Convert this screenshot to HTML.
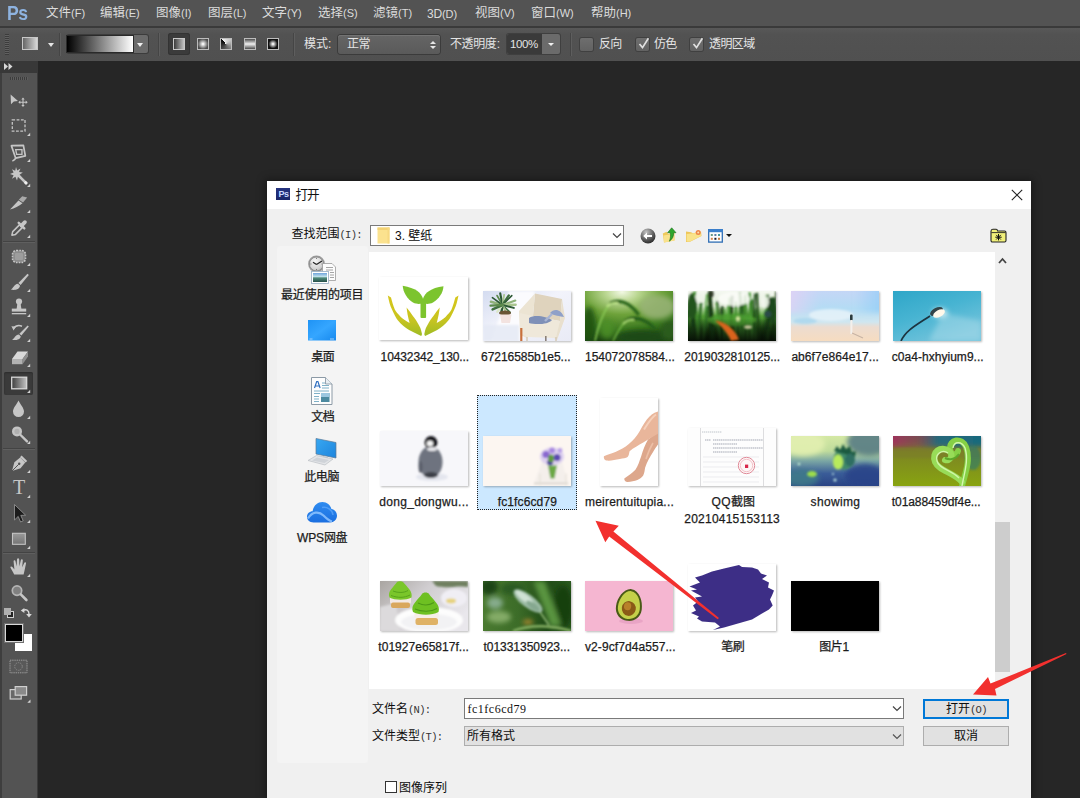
<!DOCTYPE html>
<html lang="zh-CN">
<head>
<meta charset="utf-8">
<title>Photoshop - 打开</title>
<style>
html,body{margin:0;padding:0}
body{width:1080px;height:798px;overflow:hidden;position:relative;background:#262626;font-family:"Liberation Sans",sans-serif;font-size:12px;color:#222}
.a{position:absolute}
.cj{display:inline-block;white-space:nowrap;font-family:"Liberation Sans","Noto Sans CJK SC",sans-serif;font-size:12px}
.t{position:absolute;white-space:nowrap;line-height:1}
/* ---------- Photoshop chrome ---------- */
#menubar{left:0;top:0;width:1080px;height:26px;background:#535353}
#menuline{left:0;top:26px;width:1080px;height:2px;background:#3a3a3a}
.mp{font-size:11px;letter-spacing:0}
.mi{color:#dcdcdc;font-size:12px;top:7px;letter-spacing:-0.2px}
.mi .cj{font-size:12.5px;width:25px;letter-spacing:0}
#optbar{left:0;top:28px;width:1080px;height:33px;background:linear-gradient(#585858,#525252 20%,#505050)}
.ot{color:#e4e4e4;font-size:12px}
.sep{width:1px;background:#454545;box-shadow:1px 0 0 #5e5e5e}
#toolhead{left:0;top:61px;width:38px;height:12px;background:#383838}
#tools{left:0;top:73px;width:38px;height:725px;background:#535353;border-left:2px solid #3e3e3e;border-right:1px solid #3a3a3a;box-sizing:border-box}
.tsep{left:3px;width:32px;height:1px;background:#434343;box-shadow:0 1px 0 #5f5f5f}
.corner{width:0;height:0;border-left:4px solid transparent;border-bottom:4px solid #d0d0d0}
/* ---------- dialog ---------- */
#dlg{left:267px;top:181px;width:764px;height:617px;background:#f0f0f0;box-shadow:0 0 8px 2px rgba(0,0,0,.35)}
#dtitle{left:0;top:0;width:764px;height:29px;background:#fff}
.dl{color:#0c0c0c;font-size:12px}
.lbl{color:#1c1c1c;font-size:12px;text-align:center;letter-spacing:0;-webkit-text-stroke:.25px #1c1c1c}
</style>
</head>
<body>
<!-- ===== menu bar ===== -->
<div class="a" id="menubar"></div>
<div class="a" id="menuline"></div>
<div class="t" style="left:7px;top:2px;font-size:21px;font-weight:bold;color:#8eb3e0;letter-spacing:-0.5px;transform:scaleX(.84);transform-origin:0 0">Ps</div>
<div class="t mi" style="left:46px"><span class="cj">文件</span><span class="mp">(F)</span></div>
<div class="t mi" style="left:100px"><span class="cj">编辑</span><span class="mp">(E)</span></div>
<div class="t mi" style="left:156px"><span class="cj">图像</span><span class="mp">(I)</span></div>
<div class="t mi" style="left:208px"><span class="cj">图层</span><span class="mp">(L)</span></div>
<div class="t mi" style="left:262px"><span class="cj">文字</span><span class="mp">(Y)</span></div>
<div class="t mi" style="left:318px"><span class="cj">选择</span><span class="mp">(S)</span></div>
<div class="t mi" style="left:373px"><span class="cj">滤镜</span><span class="mp">(T)</span></div>
<div class="t mi" style="left:427px;top:8px">3D<span class="mp">(D)</span></div>
<div class="t mi" style="left:475px"><span class="cj">视图</span><span class="mp">(V)</span></div>
<div class="t mi" style="left:531px"><span class="cj">窗口</span><span class="mp">(W)</span></div>
<div class="t mi" style="left:591px"><span class="cj">帮助</span><span class="mp">(H)</span></div>
<!-- ===== options bar ===== -->
<div class="a" id="optbar"></div>
<div class="a" style="left:5px;top:34px;width:4px;height:21px;background:repeating-linear-gradient(#3c3c3c 0 1px,#606060 1px 2px)"></div>
<div class="a" style="left:22px;top:37px;width:16px;height:13px;box-sizing:border-box;border:1px solid #c8c8c8;background:linear-gradient(90deg,#666,#d8d8d8)"></div>
<div class="a" style="left:48px;top:43px;width:0;height:0;border-left:3.5px solid transparent;border-right:3.5px solid transparent;border-top:4px solid #e6e6e6"></div>
<div class="a sep" style="left:59px;top:33px;height:23px"></div>
<div class="a" style="left:67px;top:35px;width:81px;height:18px;background:#6b6b6b;border-radius:2px;box-shadow:0 0 0 1px #3c3c3c"></div>
<div class="a" style="left:67px;top:36px;width:66px;height:16px;background:linear-gradient(90deg,#000,#fff);box-shadow:0 0 0 1px #2a2a2a"></div>
<div class="a" style="left:137px;top:43px;width:0;height:0;border-left:3.5px solid transparent;border-right:3.5px solid transparent;border-top:4px solid #f0f0f0"></div>
<div class="a sep" style="left:158px;top:33px;height:23px"></div>
<div class="a" style="left:168px;top:33px;width:22px;height:22px;background:#3b3b3b;border-radius:3px;box-shadow:inset 0 0 0 1px #333"></div>
<div class="a" style="left:173px;top:38px;width:12px;height:12px;box-sizing:border-box;border:1px solid #c8c8c8;background:linear-gradient(90deg,#3c3c3c,#c4c4c4)"></div>
<div class="a" style="left:196.500px;top:38px;width:12px;height:12px;box-sizing:border-box;border:1px solid #bcbcbc;background:radial-gradient(circle,#fff 5%,#4c4c4c 75%)"></div>
<div class="a" style="left:220px;top:38px;width:12px;height:12px;box-sizing:border-box;border:1px solid #bcbcbc;background:conic-gradient(from 315deg,#f4f4f4,#c8c8c8 25%,#707070 55%,#0c0c0c)"></div>
<div class="a" style="left:243.500px;top:38px;width:12px;height:12px;box-sizing:border-box;border:1px solid #bcbcbc;background:linear-gradient(#4c4c4c,#f0f0f0 50%,#4c4c4c)"></div>
<div class="a" style="left:267px;top:38px;width:12px;height:12px;box-sizing:border-box;border:1px solid #bcbcbc;background:radial-gradient(closest-side,#fff 8%,#111 90%)"></div>
<div class="a sep" style="left:293px;top:33px;height:23px"></div>
<div class="t ot" style="left:304px;top:38px"><span class="cj" style="width:24px">模式</span>:</div>
<div class="a" style="left:338px;top:35px;width:102px;height:19px;border-radius:3px;background:linear-gradient(#656565,#5a5a5a);box-shadow:0 0 0 1px #3b3b3b,inset 0 1px 0 #737373"></div>
<div class="t ot" style="left:347px;top:38px"><span class="cj" style="width:23.5px;letter-spacing:-0.5px">正常</span></div>
<div class="a" style="left:430px;top:41px;width:0;height:0;border-left:3px solid transparent;border-right:3px solid transparent;border-bottom:3px solid #e8e8e8"></div>
<div class="a" style="left:430px;top:46px;width:0;height:0;border-left:3px solid transparent;border-right:3px solid transparent;border-top:3px solid #e8e8e8"></div>
<div class="t ot" style="left:450px;top:38px"><span class="cj" style="width:46.8px;letter-spacing:-0.4px">不透明度</span>:</div>
<div class="a" style="left:507px;top:34px;width:53px;height:20px;border-radius:2px;background:#6b6b6b;box-shadow:0 0 0 1px #3f3f3f"></div>
<div class="a" style="left:507px;top:34px;width:35px;height:20px;background:#3a3a3a;border-radius:2px 0 0 2px"></div>
<div class="t ot" style="left:510px;top:39px;font-size:11.5px;letter-spacing:-0.4px">100%</div>
<div class="a" style="left:548px;top:43px;width:0;height:0;border-left:3px solid transparent;border-right:3px solid transparent;border-top:3.5px solid #f0f0f0"></div>
<div class="a sep" style="left:570px;top:33px;height:23px"></div>
<div class="a cb" style="left:580px;top:38px;width:13px;height:13px;border-radius:2px;background:linear-gradient(#6e6e6e,#626262);box-shadow:0 0 0 1px #404040"></div>
<div class="t ot" style="left:599px;top:38px"><span class="cj" style="width:23.2px;letter-spacing:-0.8px">反向</span></div>
<div class="a cb" style="left:636px;top:38px;width:13px;height:13px;border-radius:2px;background:linear-gradient(#6e6e6e,#626262);box-shadow:0 0 0 1px #404040"></div>
<svg class="a" style="left:636px;top:35px" width="16" height="16" viewBox="0 0 16 16"><path d="M3.500 9L6.500 12.600L12.400 3.200" fill="none" stroke="#e0e0e0" stroke-width="1.700"/></svg>
<div class="t ot" style="left:654px;top:38px"><span class="cj" style="width:23.2px;letter-spacing:-0.8px">仿色</span></div>
<div class="a cb" style="left:690px;top:38px;width:13px;height:13px;border-radius:2px;background:linear-gradient(#6e6e6e,#626262);box-shadow:0 0 0 1px #404040"></div>
<svg class="a" style="left:690px;top:35px" width="16" height="16" viewBox="0 0 16 16"><path d="M3.500 9L6.500 12.600L12.400 3.200" fill="none" stroke="#e0e0e0" stroke-width="1.700"/></svg>
<div class="t ot" style="left:709px;top:38px"><span class="cj" style="width:46.2px;letter-spacing:-0.6px">透明区域</span></div>
<!-- ===== tool panel ===== -->
<div class="a" id="toolhead"></div>
<svg class="a" style="left:4px;top:63px" width="9" height="7" viewBox="0 0 9 7"><path d="M0 0L4 3.5L0 7ZM4.5 0L8.5 3.5L4.5 7Z" fill="#d8d8d8"/></svg>
<div class="a" id="tools"></div>
<div class="a" style="left:10px;top:77px;width:18px;height:3px;background:repeating-linear-gradient(90deg,#3c3c3c 0 1px,#5d5d5d 1px 2px)"></div>
<svg class="a" style="left:7px;top:88px" width="26" height="26" viewBox="0 0 26 26"><path d="M3.6 6.4L4 16.2L6.8 13.6L11 13.1Z" fill="#c6c6c6"/><path d="M16 11v6.6M12.700 14.3h6.600" stroke="#c6c6c6" stroke-width="1.1" fill="none"/><path d="M16 9.600l1.700 2h-3.400zM16 19l1.700-2h-3.400zM11.300 14.300l2-1.700v3.400zM20.700 14.300l-2-1.700v3.400z" fill="#c6c6c6"/></svg>
<svg class="a" style="left:7px;top:114px" width="26" height="26" viewBox="0 0 26 26"><rect x="5.3" y="5.9" width="12.7" height="11.2" fill="none" stroke="#c6c6c6" stroke-width="1.3" stroke-dasharray="2.8 1.5"/><path d="M23.2 18.8v3.1h-3.1z" fill="#d0d0d0"/></svg>
<svg class="a" style="left:7px;top:140px" width="26" height="26" viewBox="0 0 26 26"><g transform="translate(-.4 1.400) scale(.96)"><path d="M5 4.5L17.5 4.2L19.5 15L9.5 17.5Z" fill="none" stroke="#c6c6c6" stroke-width="1.8" stroke-linejoin="round"/><path d="M9.5 8.5h6.5v5h-5.5z" fill="none" stroke="#c6c6c6" stroke-width="1.4"/><path d="M9.5 17.5C8.500 19.500 7 20 6 20.500" stroke="#c6c6c6" stroke-width="1.6" fill="none"/></g><path d="M23.2 18.8v3.1h-3.1z" fill="#d0d0d0"/></svg>
<svg class="a" style="left:7px;top:165px" width="26" height="26" viewBox="0 0 26 26"><path d="M9 2l1.2 3.6L13.5 3.5L12 7l3.8 0.6L12.5 9.8l2 3L11 11.6L10 15.5L8.4 11.8L5 13.8l1.6-3.6L3 9l3.6-1.4L5 4.2l3.2 1.6Z" fill="#c6c6c6"/><path d="M11.5 10.5L19.4 18.4" stroke="#c6c6c6" stroke-width="2.5"/><path d="M17.800 16.800l2.200 2.200" stroke="#eee" stroke-width="2.700"/><path d="M23.2 18.8v3.1h-3.1z" fill="#d0d0d0"/></svg>
<svg class="a" style="left:7px;top:191px" width="26" height="26" viewBox="0 0 26 26"><g transform="translate(-1 -1)"><path d="M4 19.5L12.5 10.5L16.5 13.2C13 16 8.5 18.5 4 19.5Z" fill="#c6c6c6"/><path d="M12.8 9.8L16.2 6.2L21.2 7.6L17 12.6Z" fill="#a9a9a9"/></g><path d="M23.2 18.8v3.1h-3.1z" fill="#d0d0d0"/></svg>
<svg class="a" style="left:7px;top:216px" width="26" height="26" viewBox="0 0 26 26"><g transform="translate(-.3 -1.600)"><path d="M5.2 20.8L6 17.2L13 10.2L15.8 13L8.8 20Z" fill="none" stroke="#c6c6c6" stroke-width="1.5" stroke-linejoin="round"/><path d="M12 8.4L17.6 14" stroke="#c6c6c6" stroke-width="2.4" stroke-linecap="round"/><path d="M14.8 11.2L18.2 7.8" stroke="#c6c6c6" stroke-width="3.800" stroke-linecap="round"/></g><path d="M23.2 18.8v3.1h-3.1z" fill="#d0d0d0"/></svg>
<svg class="a" style="left:7px;top:244px" width="26" height="26" viewBox="0 0 26 26"><rect x="5.5" y="6.5" width="13" height="12" rx="4" fill="#8c8c8c" stroke="#c6c6c6" stroke-width="1.6" stroke-dasharray="1.6 1.2"/><rect x="8" y="9" width="8" height="7" rx="1" fill="#9d9d9d"/><path d="M23.2 18.8v3.1h-3.1z" fill="#d0d0d0"/></svg>
<svg class="a" style="left:7px;top:270px" width="26" height="26" viewBox="0 0 26 26"><path d="M20.5 3.8L21.8 5L13.6 15L11.4 13Z" fill="#c6c6c6"/><path d="M11 13.8L13 15.8C12.6 19.5 8 20.6 3.8 19.6C6.4 18.4 6.8 14.4 11 13.8Z" fill="#c6c6c6"/><path d="M23.2 18.8v3.1h-3.1z" fill="#d0d0d0"/></svg>
<svg class="a" style="left:7px;top:295px" width="26" height="26" viewBox="0 0 26 26"><circle cx="12" cy="6.6" r="3.1" fill="#c6c6c6"/><path d="M10.4 8.5h3.2l0.8 5.5h-4.8z" fill="#c6c6c6"/><rect x="4.8" y="13.6" width="14.4" height="3" fill="#c6c6c6"/><rect x="4.8" y="18" width="14.4" height="1.3" fill="#c6c6c6"/><path d="M23.2 18.8v3.1h-3.1z" fill="#d0d0d0"/></svg>
<svg class="a" style="left:7px;top:320px" width="26" height="26" viewBox="0 0 26 26"><path d="M20.6 5.5L21.8 6.6L14.4 15.6L12.4 13.8Z" fill="#c6c6c6"/><path d="M12 14.6L13.8 16.4C13.4 19.4 9 20.6 5 19.8C7.6 18.6 8 15 12 14.6Z" fill="#c6c6c6"/><path d="M6.5 8.5C8.5 5.8 12 5 15 6.2" stroke="#c6c6c6" stroke-width="1.5" fill="none"/><path d="M4.4 6.2l4.4 0.2l-2.2 4z" fill="#c6c6c6"/><path d="M23.2 18.8v3.1h-3.1z" fill="#d0d0d0"/></svg>
<svg class="a" style="left:7px;top:345px" width="26" height="26" viewBox="0 0 26 26"><path d="M10.5 6.5L21 6.5L15.6 14L5 14Z" fill="#d9d9d9"/><path d="M5 14L15.6 14L15.6 19.2L5 19.2Z" fill="#b2b2b2"/><path d="M15.6 14L21 6.5L21 11.6L15.6 19.2Z" fill="#8f8f8f"/><path d="M23.2 18.8v3.1h-3.1z" fill="#d0d0d0"/></svg>
<div class="a" style="left:4px;top:372px;width:29px;height:23px;background:#3a3a3a;border-radius:2px;box-shadow:inset 0 1px 2px #2c2c2c"></div>
<svg class="a" style="left:7px;top:371px" width="26" height="26" viewBox="0 0 26 26"><rect x="4.7" y="6.2" width="15" height="11.6" fill="url(#gtool)" stroke="#d8d8d8" stroke-width="1.3"/><defs><linearGradient id="gtool"><stop offset="0" stop-color="#3c3c3c"/><stop offset="1" stop-color="#c4c4c4"/></linearGradient></defs><path d="M23.2 18.8v3.1h-3.1z" fill="#d0d0d0"/></svg>
<svg class="a" style="left:7px;top:397px" width="26" height="26" viewBox="0 0 26 26"><path d="M11.5 3.5C13.5 8 17 10.8 17 14.6A5.5 5.5 0 0 1 6 14.6C6 10.8 9.5 8 11.5 3.5Z" fill="#c6c6c6"/><path d="M23.2 18.8v3.1h-3.1z" fill="#d0d0d0"/></svg>
<svg class="a" style="left:7px;top:422px" width="26" height="26" viewBox="0 0 26 26"><circle cx="10" cy="9.4" r="5" fill="#c4c4c4"/><circle cx="10" cy="9.4" r="2.6" fill="#b0b0b0"/><path d="M13.6 13L20 19.4" stroke="#c6c6c6" stroke-width="2.4" stroke-linecap="round"/><path d="M23.2 18.8v3.1h-3.1z" fill="#d0d0d0"/></svg>
<svg class="a" style="left:7px;top:451px" width="26" height="26" viewBox="0 0 26 26"><path d="M5 20L7.4 11.2L13.2 6.6L18.2 11.4L13.6 17.2Z" fill="#c6c6c6"/><path d="M5 20L11.6 13.4" stroke="#535353" stroke-width="1"/><circle cx="12.2" cy="12.8" r="1.2" fill="#535353"/><path d="M14.6 4.6L20.2 10L18.6 11.6L13 6.2Z" fill="#c6c6c6"/><path d="M23.2 18.8v3.1h-3.1z" fill="#d0d0d0"/></svg>
<svg class="a" style="left:7px;top:476px" width="26" height="26" viewBox="0 0 26 26"><text x="12" y="18.400" font-family="Liberation Serif" font-size="20" text-anchor="middle" fill="#c6c6c6">T</text><path d="M23.2 18.8v3.1h-3.1z" fill="#d0d0d0"/></svg>
<svg class="a" style="left:7px;top:501px" width="26" height="26" viewBox="0 0 26 26"><path d="M7.5 3.5L7.5 19L11.2 15.4L13.6 21L16.2 19.8L13.8 14.4L18.6 14.2Z" fill="#1c1c1c" stroke="#9a9a9a" stroke-width="0.8"/><path d="M23.2 18.8v3.1h-3.1z" fill="#d0d0d0"/></svg>
<svg class="a" style="left:7px;top:527px" width="26" height="26" viewBox="0 0 26 26"><rect x="5.500" y="6.300" width="12.800" height="11" fill="url(#grect)" stroke="#c4c4c4" stroke-width="1.1"/><defs><linearGradient id="grect" x2="0" y2="1"><stop offset="0" stop-color="#9a9a9a"/><stop offset="1" stop-color="#747474"/></linearGradient></defs><path d="M23.2 18.8v3.1h-3.1z" fill="#d0d0d0"/></svg>
<svg class="a" style="left:7px;top:555px" width="26" height="26" viewBox="0 0 26 26"><path d="M7.2 19.5C5.6 16.6 4.4 14.4 3.4 12.6C3.2 11.4 4.6 11 5.4 12L7.4 14.4L6.6 6.4C6.6 5 8.4 5 8.6 6.4L9.6 11.6L10 4.4C10.2 3 12 3 12.2 4.4L12.4 11.6L13.8 5.2C14.2 3.8 15.8 4.2 15.8 5.6L15.2 12.2L17.2 8C17.8 6.8 19.2 7.4 19 8.6L17.6 15.2L16.6 19.5Z" fill="#c6c6c6"/><path d="M23.2 18.8v3.1h-3.1z" fill="#d0d0d0"/></svg>
<svg class="a" style="left:7px;top:581px" width="26" height="26" viewBox="0 0 26 26"><circle cx="10" cy="9.6" r="4.7" fill="#808080" stroke="#b4b4b4" stroke-width="1.700"/><path d="M13.8 13.4L19.4 19" stroke="#c6c6c6" stroke-width="2.6" stroke-linecap="round"/></svg>
<div class="a tsep" style="top:241px"></div>
<div class="a tsep" style="top:448px"></div>
<div class="a tsep" style="top:552px"></div>
<!-- mini swatches + swap -->
<div class="a" style="left:7px;top:611px;width:5px;height:5px;background:#222;border:1px solid #d0d0d0"></div>
<div class="a" style="left:4px;top:608px;width:6.500px;height:6.500px;background:#b0b0b0;border:0"></div>
<svg class="a" style="left:20px;top:606px" width="13" height="13" viewBox="0 0 13 13"><path d="M3 4.5C6 3 9 4 9 8" fill="none" stroke="#d8d8d8" stroke-width="1.4"/><path d="M0.8 4.6L4.4 2V7Z" fill="#d8d8d8"/><path d="M6.2 8h5.6L9 11.6Z" fill="#d8d8d8"/></svg>
<div class="a" style="left:15px;top:634px;width:17px;height:17px;background:#fff"></div>
<div class="a" style="left:5px;top:624px;width:16px;height:16px;background:#000;border:1px solid #d8d8d8;box-shadow:0 0 0 1px #707070"></div>
<svg class="a" style="left:9px;top:659px" width="20" height="16" viewBox="0 0 20 16"><rect x="1" y="1.2" width="17" height="12.6" fill="#595959" stroke="#9a9a9a" stroke-width="1" stroke-dasharray="1.4 0.8"/><circle cx="9.5" cy="7.5" r="3.8" fill="none" stroke="#8a8a8a" stroke-width="1" stroke-dasharray="1.4 1"/></svg>
<svg class="a" style="left:9px;top:685px" width="24" height="20" viewBox="0 0 24 20"><rect x="1.2" y="4.6" width="11" height="9.4" fill="#686868" stroke="#cfcfcf" stroke-width="1.2"/><rect x="6.2" y="1.6" width="11.4" height="8.6" fill="#8a8a8a" stroke="#cfcfcf" stroke-width="1.2"/><path d="M21.5 14.5v3.2h-3.2z" fill="#d4d4d4"/></svg>

<!-- ===== dialog ===== -->
<div class="a" id="dlg"></div>
<div class="a" style="left:267px;top:181px;width:764px;height:28px;background:#fff"></div>
<!-- title icon + text -->
<div class="a" style="left:276.200px;top:188px;width:13.400px;height:12.400px;background:linear-gradient(#26347f,#1a266a)"></div>
<div class="t" style="left:278.5px;top:190px;font-size:9px;font-weight:bold;color:#c9d8ff;letter-spacing:-0.5px">Ps</div>
<div class="t" style="left:295.500px;top:189px;color:#111"><span class="cj" style="font-size:12.6px;width:24.2px;letter-spacing:-1px">打开</span></div>
<svg class="a" style="left:1011px;top:189px" width="12" height="12" viewBox="0 0 12 12"><path d="M0.8 0.8L11.2 11.2M11.2 0.8L0.8 11.2" stroke="#222" stroke-width="1.1"/></svg>
<!-- look-in row -->
<div class="t dl" style="left:291.500px;top:228px"><span class="cj" style="width:48px">查找范围</span><span style="font-family:'Liberation Mono',monospace;font-size:10.5px;letter-spacing:-0.7px;color:#333">(I):</span></div>
<div class="a" style="left:370px;top:225px;width:254px;height:21px;box-sizing:border-box;border:1px solid #7a7a7a;background:#fff"></div>
<svg class="a" style="left:376px;top:226px" width="15" height="19" viewBox="0 0 15 19"><path d="M1.5 1.5h12v16h-12z" fill="#fbe28e"/><path d="M1.5 1.5h12v2.5h-12z" fill="#f3d273"/><path d="M11.5 1.5h2v16h-2z" fill="#f6d981"/></svg>
<div class="t dl" style="left:395px;top:230px"><span style="font-size:12px">3.</span> <span class="cj" style="width:24px">壁纸</span></div>
<svg class="a" style="left:612px;top:232px" width="10" height="7" viewBox="0 0 10 7"><path d="M1 1.5L5 5.5L9 1.5" fill="none" stroke="#444" stroke-width="1.2"/></svg>
<!-- toolbar icons -->
<svg class="a" style="left:639px;top:227px" width="18" height="18" viewBox="0 0 18 18"><defs><radialGradient id="gb" cx=".38" cy=".25" r=".85"><stop offset="0" stop-color="#c4c4c4"/><stop offset=".5" stop-color="#6a6a6a"/><stop offset="1" stop-color="#1c1c1c"/></radialGradient></defs><circle cx="9" cy="9" r="7.500" fill="url(#gb)"/><path d="M4.200 9L8 5.400V7.900H13V10.100H8V12.600Z" fill="#fff"/></svg>
<svg class="a" style="left:662px;top:227px" width="16" height="18" viewBox="0 0 16 18"><path d="M.800 6.500L4.500 4.800L6.500 7L12.500 5.500V13.500L2 15.500Z" fill="#efc95c"/><path d="M1.500 8.500L11.800 6.800L12.500 13.500L2 15.500Z" fill="#f9e28c"/><path d="M9.700 .8L14 5.700H11.600C11.800 9 10.600 12 7.400 14.200C8.600 11 8.800 8.400 8.200 5.700H5.600Z" fill="#2ea62e" stroke="#1a6e1a" stroke-width=".6"/></svg>
<svg class="a" style="left:685px;top:229px" width="18" height="15" viewBox="0 0 18 15"><path d="M1 2.500L6 3.200L8 4.200L16 2.400L16.500 7L5 12.800L1 13Z" fill="#eec65a"/><path d="M1.600 5L15.500 3.400L16 7L5 12.500L1.600 12.600Z" fill="#f9e38a"/><circle cx="13.200" cy="3.400" r="2.500" fill="#ee8648"/><circle cx="13.200" cy="3.400" r="1" fill="#fbe0a8"/></svg>
<svg class="a" style="left:707.800px;top:228.600px" width="15" height="14" viewBox="0 0 15 14"><rect x=".7" y=".7" width="13.600" height="12.400" fill="#fdfdfd" stroke="#2f6db4" stroke-width="1.300"/><rect x=".1" y=".1" width="14.800" height="3.100" fill="#3b80cc"/><rect x="2.800" y="5" width="2" height="2" fill="#6a9a84"/><rect x="6.400" y="5" width="2" height="2" fill="#5a7ea8"/><rect x="10" y="5" width="2" height="2" fill="#4a9a9a"/><rect x="2.800" y="8.800" width="2" height="2" fill="#d8864a"/><rect x="6.400" y="8.800" width="2" height="2" fill="#1c1c2c"/><rect x="10" y="8.800" width="2" height="2" fill="#c87a3a"/></svg>
<div class="a" style="left:726px;top:234.300px;width:0;height:0;border-left:3.2px solid transparent;border-right:3.2px solid transparent;border-top:3.600px solid #111"></div>
<svg class="a" style="left:990px;top:228px" width="17" height="15" viewBox="0 0 17 15"><path d="M1 3.2C1 2 1.6 1.2 2.8 1.2H6.2C7 1.2 7.4 1.8 7.6 3H14.6C15.4 3 16 3.6 16 4.4V12.6C16 13.4 15.4 14 14.6 14H2.4C1.6 14 1 13.4 1 12.6Z" fill="#f1f07a" stroke="#222" stroke-width="1.1"/><path d="M1.4 4.6H15.6" stroke="#222" stroke-width=".9"/><path d="M8.5 6v6.4M5.3 9.2h6.4M6.2 6.9l4.6 4.6M10.8 6.9l-4.6 4.6" stroke="#111" stroke-width="1"/></svg>
<!-- places bar -->
<div class="a" style="left:278px;top:247px;width:89px;height:515px;background:#f4f4f4;box-shadow:0 0 2px rgba(255,255,255,.8)"></div>
<!-- file list -->
<div class="a" style="left:369px;top:252px;width:626px;height:437px;background:#fff"></div>
<svg class="a" style="left:998px;top:257px" width="9" height="7" viewBox="0 0 9 7"><path d="M1 6L4.5 2L8 6" fill="none" stroke="#444" stroke-width="1.8"/></svg>
<div class="a" style="left:995px;top:522px;width:15px;height:150px;background:#cdcdcd"></div>
<!-- bottom fields -->
<div class="t dl" style="left:372px;top:703px"><span class="cj" style="width:36px">文件名</span><span style="font-family:'Liberation Mono',monospace;font-size:10.5px;letter-spacing:-0.7px;color:#333">(N):</span></div>
<div class="t dl" style="left:372px;top:730px"><span class="cj" style="width:48px">文件类型</span><span style="font-family:'Liberation Mono',monospace;font-size:10.5px;letter-spacing:-0.7px;color:#333">(T):</span></div>
<div class="a" style="left:464px;top:698px;width:440px;height:21px;box-sizing:border-box;border:1px solid #7a7a7a;background:#fff"></div>
<div class="t" style="left:467.500px;top:702.500px;font-family:'Liberation Serif',serif;font-size:12px;color:#111;letter-spacing:.5px">fc1fc6cd79</div>
<svg class="a" style="left:891.500px;top:705px" width="10" height="7" viewBox="0 0 10 7"><path d="M1 1.5L5 5.5L9 1.5" fill="none" stroke="#444" stroke-width="1.2"/></svg>
<div class="a" style="left:464px;top:726px;width:440px;height:20px;box-sizing:border-box;border:1px solid #adadad;background:#e1e1e1"></div>
<div class="t dl" style="left:467px;top:730px"><span class="cj" style="width:48px">所有格式</span></div>
<svg class="a" style="left:891.500px;top:733px" width="10" height="7" viewBox="0 0 10 7"><path d="M1 1.5L5 5.5L9 1.5" fill="none" stroke="#555" stroke-width="1.2"/></svg>
<div class="a" style="left:923px;top:699px;width:86px;height:20px;box-sizing:border-box;border:2px solid #0078d7;background:#e1e1e1"></div>
<div class="t dl" style="left:946px;top:703px"><span class="cj" style="width:24px">打开</span><span style="font-family:'Liberation Mono',monospace;font-size:10.5px;letter-spacing:-0.7px;color:#333">(O)</span></div>
<div class="a" style="left:923px;top:726px;width:86px;height:20px;box-sizing:border-box;border:1px solid #adadad;background:#e1e1e1"></div>
<div class="t dl" style="left:954px;top:730px"><span class="cj" style="width:24px">取消</span></div>
<div class="a" style="left:385px;top:781px;width:12px;height:12px;box-sizing:border-box;border:1px solid #333;background:#fff"></div>
<div class="t dl" style="left:399px;top:782px"><span class="cj" style="width:48px">图像序列</span></div>
<!-- recent -->
<svg class="a" style="left:306px;top:254px" width="32" height="32" viewBox="0 0 32 32">
<defs><linearGradient id="pimg" x2="0" y2="1"><stop offset="0" stop-color="#6fa4dc"/><stop offset=".4" stop-color="#bfe0ea"/><stop offset=".55" stop-color="#4f8a7a"/><stop offset="1" stop-color="#27504a"/></linearGradient></defs>
<defs><radialGradient id="pclk" cx=".4" cy=".3" r=".8"><stop offset="0" stop-color="#f6f6f6"/><stop offset=".7" stop-color="#d2d2d2"/><stop offset="1" stop-color="#a8a8a8"/></radialGradient></defs><circle cx="10.500" cy="10" r="8.400" fill="#9c9c9c"/><circle cx="10.500" cy="10" r="7" fill="url(#pclk)" stroke="#7e7e7e" stroke-width=".7"/><path d="M10.500 10.500L7 8.200M10.500 10.500L16 7" stroke="#222" stroke-width="1.200"/><path d="M10.500 3.800v1.200M10.500 15v1.200M4.300 10h1.200M15.500 10h1.200" stroke="#666" stroke-width=".8"/>
<path d="M16.5 9.5h9.5l3.5 3.5v13.500h-13z" fill="#fcfcfc" stroke="#9a9a9a" stroke-width=".8"/><path d="M20 13.500h7M20 16h7M24 18.500h4M24 21h4M24 23.500h4" stroke="#8e8e8e" stroke-width=".8"/>
<rect x="5.5" y="17.5" width="17" height="12" fill="#fff" stroke="#9fb4c8" stroke-width=".9"/><rect x="7" y="19" width="14" height="9" fill="url(#pimg)"/>
</svg>
<div class="t lbl" style="left:281px;top:289px;width:81px;text-align:left"><span class="cj" style="width:82.5px;letter-spacing:-0.25px">最近使用的项目</span></div>
<!-- desktop -->
<svg class="a" style="left:308px;top:320px" width="28" height="21" viewBox="0 0 28 21"><defs><linearGradient id="pdesk" x1="0" y1="0" x2="1" y2="1"><stop offset="0" stop-color="#1f93f5"/><stop offset=".5" stop-color="#35a6ff"/><stop offset="1" stop-color="#1789ee"/></linearGradient></defs><rect x="0" y="0" width="28" height="20.5" fill="url(#pdesk)"/><path d="M1.5 19h3M22 19h4" stroke="#bfe1ff" stroke-width=".8"/></svg>
<div class="t lbl" style="left:311px;top:351px"><span class="cj" style="width:23.3px;letter-spacing:-0.7px">桌面</span></div>
<!-- documents -->
<svg class="a" style="left:310px;top:376px" width="24" height="30" viewBox="0 0 24 30"><path d="M1.5 1.5h14l6.500 6.500v20.500h-20.500z" fill="#fdfdfd" stroke="#8c9aa6" stroke-width="1"/><path d="M15.500 1.500v6.500h6.500" fill="#e8eef2" stroke="#8c9aa6" stroke-width=".9"/><path d="M4.500 12l2.200-6.500h1.200l2.200 6.500M5.400 10h3.800" stroke="#2f6fc0" stroke-width="1.2" fill="none"/><path d="M12 7h3M12 9.500h7M12 12h7M4 15h15M4 17.500h6" stroke="#7fb1c8" stroke-width="1"/><rect x="11" y="17" width="8.500" height="9" fill="#4c8aa0"/><rect x="11" y="17" width="8.500" height="4" fill="#9cc7e0"/><path d="M4 20.500h5M4 23h5M4 25.500h5" stroke="#7fb1c8" stroke-width="1"/></svg>
<div class="t lbl" style="left:311px;top:411px"><span class="cj" style="width:23.3px;letter-spacing:-0.7px">文档</span></div>
<!-- this pc -->
<svg class="a" style="left:306px;top:437px" width="32" height="29" viewBox="0 0 32 29"><defs><linearGradient id="ppc" x1="0" y1="0" x2="1" y2="1"><stop offset="0" stop-color="#38a8f2"/><stop offset="1" stop-color="#1d84dc"/></linearGradient></defs><path d="M10 1.500L30 5.500V21L10 17Z" fill="url(#ppc)" stroke="#5b7a96" stroke-width=".7"/><path d="M17 19l5 1l-1 3.500l-6-1z" fill="#c8ccd0"/><path d="M2 23.500L10.500 18.500L27 22L19 28Z" fill="#e3e5e8" stroke="#b4b8bd" stroke-width=".6"/><path d="M6 23.500L11 20.500L23 23L18.500 26Z" fill="#cfd3d8"/></svg>
<div class="t lbl" style="left:304px;top:471px"><span class="cj" style="width:35.2px;letter-spacing:-0.4px">此电脑</span></div>
<!-- wps cloud -->
<svg class="a" style="left:306px;top:500px" width="32" height="24" viewBox="0 0 32 24"><defs><linearGradient id="pwps" x2="0" y2="1"><stop offset="0" stop-color="#2f8cf0"/><stop offset="1" stop-color="#1b6fe0"/></linearGradient></defs><path d="M7.500 22.500C3.500 22.500 1 20 1 16.800C1 13.600 3.600 11.300 6.600 11.300C7.400 5.800 11.400 2 16.400 2C21 2 24.400 5 25.400 9C28.800 9.600 31 12.300 31 15.600C31 19.600 28 22.500 24 22.500Z" fill="url(#pwps)"/><path d="M2 18.500C6 11.500 13 11 17.500 15.500C20 18 22.500 20.500 26 21.500" fill="none" stroke="#8fc4ff" stroke-width="2.200" opacity=".85"/><path d="M16 7.500C21 6.500 26.500 9.500 27 15" fill="none" stroke="#6ab0ff" stroke-width="1.500" opacity=".6"/></svg>
<div class="t lbl" style="left:297px;top:532px;letter-spacing:-0.2px">WPS<span class="cj" style="width:23.3px;letter-spacing:-0.7px">网盘</span></div>

<!-- ===== thumbnails ===== -->
<svg width="0" height="0" style="position:absolute" aria-hidden="true"><defs>
<filter id="b1" x="-20%" y="-20%" width="140%" height="140%"><feGaussianBlur stdDeviation="0.6"/></filter>
<filter id="b2" x="-20%" y="-20%" width="140%" height="140%"><feGaussianBlur stdDeviation="1.2"/></filter>
<filter id="b3" x="-30%" y="-30%" width="160%" height="160%"><feGaussianBlur stdDeviation="2.5"/></filter>
<filter id="b5" x="-40%" y="-40%" width="180%" height="180%"><feGaussianBlur stdDeviation="5"/></filter>
</defs></svg>
<style>.th{position:absolute;box-shadow:1px 1px 2px rgba(0,0,0,.28)}</style>
<!-- selection box -->
<div class="a" style="left:477px;top:395px;width:100px;height:115px;box-sizing:border-box;background:#cce8ff;border:1px dotted #222"></div>

<!-- T1 logo -->
<svg class="th" style="left:379px;top:277px" width="89" height="63" viewBox="0 0 89 63"><defs><linearGradient id="t1h" x2="0" y2="1"><stop offset="0" stop-color="#d6c61c"/><stop offset=".6" stop-color="#c8c420"/><stop offset="1" stop-color="#9ebc26"/></linearGradient></defs><rect width="89" height="63" fill="#fff"/>
<g filter="url(#b1)"><path d="M44 21.500C42 16 37 11 23.700 8.800C24 15 28 22 34 25.500C38 27.500 42 27 44 26Z" fill="#7cc42f"/><path d="M44 21.500C46 16 51.500 11 64.500 9.300C64.200 15.500 60 22 54 25.500C50 27.500 46 27 44 26Z" fill="#7cc42f"/><rect x="41.500" y="22" width="5.600" height="19" rx="1" fill="#7cc42f"/>
<path d="M8.800 18.600C10 24 11 29 13 32.500C15 37 17 41 19 43.600C22 47.500 26 50.500 30.100 52.900C34 55 38 57 42.200 58.900C43.200 57.500 43 56.500 42.700 55.700C42 52 41 50 39.400 47.300C38 44.500 36 41.500 33.900 39C32 36 30 33 27.600 30.400C28 35 29 40 30.600 45.900C27 44 24 42 21.800 39.900C19 37 17 35 15.800 32.500C14 28 13 24 12 20.400Z" fill="url(#t1h)"/><g transform="translate(88.300 0) scale(-1 1)"><path d="M8.800 18.600C10 24 11 29 13 32.500C15 37 17 41 19 43.600C22 47.500 26 50.500 30.100 52.900C34 55 38 57 42.200 58.900C43.200 57.500 43 56.500 42.700 55.700C42 52 41 50 39.400 47.300C38 44.500 36 41.500 33.900 39C32 36 30 33 27.600 30.400C28 35 29 40 30.600 45.900C27 44 24 42 21.800 39.900C19 37 17 35 15.800 32.500C14 28 13 24 12 20.400Z" fill="url(#t1h)"/></g></g></svg>

<!-- T2 chair -->
<svg class="th" style="left:483px;top:291px" width="88" height="50" viewBox="0 0 88 50"><defs><linearGradient id="t2a" x2="1" y2="1"><stop offset="0" stop-color="#d4dcf0"/><stop offset=".45" stop-color="#f2f3fb"/><stop offset="1" stop-color="#e9ebf6"/></linearGradient></defs><rect width="88" height="50" fill="url(#t2a)"/>
<g filter="url(#b2)"><path d="M26 0L52 0L40 50L8 50Z" fill="#fbfbfe"/><rect x="0" y="34" width="36" height="16" fill="#e4e8f4" opacity=".8"/></g>
<g filter="url(#b1)"><path d="M19.5 14.0L7.9 10.8" stroke="#8fb27a" stroke-width="2.5" stroke-linecap="round"/><path d="M19.5 14.0L9.4 6.7" stroke="#2e5a36" stroke-width="1.6" stroke-linecap="round"/><path d="M19.5 14.0L14.1 4.6" stroke="#5c8a4c" stroke-width="1.8" stroke-linecap="round"/><path d="M19.5 14.0L17.2 2.2" stroke="#2e5a36" stroke-width="2.1" stroke-linecap="round"/><path d="M19.5 14.0L21.1 3.8" stroke="#a9c48f" stroke-width="1.8" stroke-linecap="round"/><path d="M19.5 14.0L25.8 4.4" stroke="#3f7040" stroke-width="2.3" stroke-linecap="round"/><path d="M19.5 14.0L28.8 4.6" stroke="#2e5a36" stroke-width="1.6" stroke-linecap="round"/><path d="M19.5 14.0L32.3 9.6" stroke="#8fb27a" stroke-width="2.1" stroke-linecap="round"/><path d="M19.5 14.0L32.7 13.7" stroke="#a9c48f" stroke-width="2.4" stroke-linecap="round"/><path d="M19.5 14.0L30.8 16.9" stroke="#2e5a36" stroke-width="2.0" stroke-linecap="round"/><path d="M19.5 14.0L27.1 21.4" stroke="#3f7040" stroke-width="1.6" stroke-linecap="round"/><path d="M19.5 14.0L22.7 20.3" stroke="#a9c48f" stroke-width="2.0" stroke-linecap="round"/><path d="M19.5 14.0L18.5 20.9" stroke="#2e5a36" stroke-width="2.4" stroke-linecap="round"/><path d="M19.5 14.0L14.2 20.8" stroke="#dbe8c8" stroke-width="2.2" stroke-linecap="round"/><path d="M19.5 14.0L9.6 18.4" stroke="#3f7040" stroke-width="2.5" stroke-linecap="round"/><path d="M19.5 14.0L7.5 14.6" stroke="#5c8a4c" stroke-width="2.3" stroke-linecap="round"/><ellipse cx="22" cy="22" rx="6" ry="2.600" fill="#6a5434"/><path d="M17 23.500h11.500l-1.500 8.500h-8.500z" fill="#f3e3e0"/>
<path d="M52 2.500L79 8L77 30L50 25Z" fill="#dfd3bd"/><path d="M52 2.500L36 20L37 44L44 47L50 25Z" fill="#ece4d3"/><path d="M79 8L82 27L74 49L70 46L77 30Z" fill="#e9e0ce"/><path d="M37 22L50 25L77 30L73 47L44 46L37 42Z" fill="#efe8da"/><path d="M46 27C52 23 64 26 69 29C66 33.500 52 34 46 32Z" fill="#7f90b8"/><path d="M67 22C71 17 78 18 81 26C77 25 71 25 67 22Z" fill="#8fa0c8"/><path d="M69 23L62 30" stroke="#a8b4d4" stroke-width="2.400"/><rect x="37.200" y="37" width="2.200" height="13" fill="#c8703e"/><rect x="62" y="45" width="1.600" height="5" fill="#8a8078"/><path d="M44 46L44 50M73 46L73 50" stroke="#d8ccb8" stroke-width="1.600"/></g></svg>

<!-- T3 green foxtail -->
<svg class="th" style="left:585px;top:291px" width="88" height="50" viewBox="0 0 88 50"><defs><radialGradient id="t3a" cx=".42" cy=".02" r="1"><stop offset="0" stop-color="#f2f8e4"/><stop offset=".18" stop-color="#bcd894"/><stop offset=".45" stop-color="#6ea23a"/><stop offset=".75" stop-color="#3c7a20"/><stop offset="1" stop-color="#1a4210"/></radialGradient></defs><rect width="88" height="50" fill="url(#t3a)"/>
<g filter="url(#b3)"><ellipse cx="72" cy="16" rx="18" ry="12" fill="#9ab478" opacity=".85"/><ellipse cx="4" cy="34" rx="7" ry="18" fill="#1f5212" opacity=".9"/><ellipse cx="56" cy="46" rx="24" ry="7" fill="#1c4812"/><ellipse cx="84" cy="40" rx="8" ry="10" fill="#2c5c1c"/><ellipse cx="22" cy="38" rx="7" ry="10" fill="#4c9028" opacity=".8"/></g>
<g filter="url(#b2)"><path d="M10 50C13 36 17 24 23 15" stroke="#8ccc58" stroke-width="1.500" fill="none"/><path d="M28 50C32 42 35 36 40 31" stroke="#78bc48" stroke-width="1.400" fill="none"/>
<path d="M26 12C34 8.500 44 11 53 23" stroke="#2c661a" stroke-width="3.400" fill="none" stroke-linecap="round"/><path d="M41 30C49 24.500 60 28 69 37" stroke="#28601a" stroke-width="3.600" fill="none" stroke-linecap="round"/><path d="M22 15.500C25 12.500 29 11.500 33 12" stroke="#c4ec8c" stroke-width="1.800" fill="none"/><path d="M38 33C41 30 45 28.500 49 29" stroke="#b0e078" stroke-width="1.800" fill="none"/></g></svg>

<!-- T4 grass -->
<svg class="th" style="left:688px;top:291px" width="88" height="50" viewBox="0 0 88 50"><defs><linearGradient id="t4a" x2="0" y2="1"><stop offset="0" stop-color="#f4f8f0"/><stop offset=".3" stop-color="#e4eedc"/><stop offset=".5" stop-color="#58a238"/><stop offset=".75" stop-color="#1f4a16"/><stop offset="1" stop-color="#081406"/></linearGradient><linearGradient id="t4b" x2="0" y2="1"><stop offset="0" stop-color="#0a1a08" stop-opacity="0"/><stop offset=".55" stop-color="#0a1a08" stop-opacity="0"/><stop offset="1" stop-color="#050c04" stop-opacity=".92"/></linearGradient></defs><rect width="88" height="50" fill="url(#t4a)"/>
<g filter="url(#b2)"><path d="M39.6 50Q41.7 30.6 43.9 11.2" stroke="#173a12" stroke-width="2.0" fill="none"/><path d="M76.700 50Q78.200 26.900 79.700 3.800" stroke="#173a12" stroke-width="2.3" fill="none"/><path d="M71.0 50Q70.0 25.9 69.0 1.9" stroke="#1f4a18" stroke-width="2.2" fill="none"/><path d="M79.9 50Q80.4 31.3 80.9 12.7" stroke="#173a12" stroke-width="2.9" fill="none"/><path d="M58.2 50Q56.4 31.2 54.7 12.3" stroke="#1f4a18" stroke-width="2.7" fill="none"/><path d="M3.8 50Q5.7 25.4 7.6 0.7" stroke="#4a9a34" stroke-width="1.3" fill="none"/><path d="M40.7 50Q42.4 29.4 44.1 8.8" stroke="#4a9a34" stroke-width="1.6" fill="none"/><path d="M25.1 50Q23.0 25.0 20.9 0.1" stroke="#245a1c" stroke-width="1.7" fill="none"/><path d="M89.8 50Q91.5 35.0 93.2 19.9" stroke="#245a1c" stroke-width="1.7" fill="none"/><path d="M67.7 50Q65.4 30.1 63.0 10.3" stroke="#4a9a34" stroke-width="2.6" fill="none"/><path d="M34.8 50Q34.3 33.5 33.7 16.9" stroke="#1f4a18" stroke-width="2.7" fill="none"/><path d="M-1.9 50Q0.1 27.1 2.2 4.2" stroke="#173a12" stroke-width="1.9" fill="none"/><path d="M63.2 50Q63.5 29.2 63.9 8.4" stroke="#2c6a20" stroke-width="2.6" fill="none"/><path d="M22.8 50Q22.0 25.9 21.1 1.7" stroke="#173a12" stroke-width="2.6" fill="none"/><path d="M8.9 50Q6.9 27.5 4.9 4.9" stroke="#1f4a18" stroke-width="2.0" fill="none"/><path d="M42.8 50Q41.2 31.8 39.7 13.6" stroke="#4a9a34" stroke-width="1.5" fill="none"/><path d="M65.3 50Q66.1 26.3 66.8 2.6" stroke="#1f4a18" stroke-width="1.9" fill="none"/><path d="M89.1 50Q90.9 25.0 92.7 0.0" stroke="#4a9a34" stroke-width="1.7" fill="none"/><path d="M79.4 50Q78.9 27.1 78.4 4.2" stroke="#4a9a34" stroke-width="2.4" fill="none"/><path d="M7.2 50Q5.8 34.9 4.4 19.8" stroke="#3f8a2c" stroke-width="1.2" fill="none"/><path d="M54.2 50Q53.6 33.3 53.0 16.6" stroke="#1f4a18" stroke-width="1.4" fill="none"/><path d="M51.6 50Q52.1 27.4 52.6 4.9" stroke="#3f8a2c" stroke-width="2.3" fill="none"/><path d="M9.7 50Q11.4 30.9 13.0 11.7" stroke="#2c6a20" stroke-width="2.8" fill="none"/><path d="M14.8 50Q16.9 26.5 18.9 3.1" stroke="#4a9a34" stroke-width="1.6" fill="none"/><path d="M15.5 50Q17.7 32.4 19.9 14.8" stroke="#2c6a20" stroke-width="2.4" fill="none"/><path d="M33.7 50Q31.6 29.8 29.5 9.7" stroke="#1f4a18" stroke-width="1.4" fill="none"/><path d="M1.6 50Q0.3 34.6 -1.1 19.3" stroke="#245a1c" stroke-width="1.9" fill="none"/><path d="M36.7 50Q36.7 34.0 36.6 18.1" stroke="#4a9a34" stroke-width="1.5" fill="none"/><path d="M64.3 50Q62.9 25.7 61.6 1.4" stroke="#4a9a34" stroke-width="2.4" fill="none"/><path d="M54.7 50Q53.2 25.7 51.8 1.5" stroke="#2c6a20" stroke-width="2.5" fill="none"/><path d="M4.4 50Q3.1 29.1 1.9 8.2" stroke="#1f4a18" stroke-width="1.5" fill="none"/><path d="M31.9 50Q30.1 30.7 28.2 11.4" stroke="#3f8a2c" stroke-width="1.4" fill="none"/><path d="M39.4 50Q40.6 28.3 41.8 6.6" stroke="#4a9a34" stroke-width="2.3" fill="none"/><path d="M10.9 50Q8.5 25.4 6.1 0.7" stroke="#3f8a2c" stroke-width="2.5" fill="none"/><path d="M86.6 50Q87.3 25.2 87.9 0.4" stroke="#173a12" stroke-width="1.3" fill="none"/><path d="M26.6 50Q24.5 26.4 22.3 2.7" stroke="#173a12" stroke-width="2.2" fill="none"/><path d="M65.8 50Q67.0 34.0 68.2 18.0" stroke="#245a1c" stroke-width="1.4" fill="none"/><path d="M86.6 50Q84.6 28.4 82.5 6.8" stroke="#173a12" stroke-width="2.8" fill="none"/><path d="M78.1 50Q79.6 29.2 81.0 8.3" stroke="#173a12" stroke-width="2.2" fill="none"/><path d="M55.5 50Q55.9 28.8 56.3 7.6" stroke="#4a9a34" stroke-width="1.3" fill="none"/><path d="M6.3 50Q5.1 26.2 3.9 2.3" stroke="#173a12" stroke-width="2.5" fill="none"/><path d="M33.7 50Q34.1 32.4 34.5 14.7" stroke="#173a12" stroke-width="2.0" fill="none"/><path d="M47.8 50Q47.9 30.2 47.9 10.4" stroke="#3f8a2c" stroke-width="2.3" fill="none"/><path d="M42.2 50Q43.2 27.3 44.2 4.6" stroke="#173a12" stroke-width="2.6" fill="none"/><path d="M58.7 50Q60.7 29.9 62.7 9.7" stroke="#3f8a2c" stroke-width="1.7" fill="none"/><path d="M60.4 50Q58.7 27.0 57.1 4.1" stroke="#3f8a2c" stroke-width="2.4" fill="none"/><ellipse cx="46" cy="8" rx="16" ry="7" fill="#fbfdf8" opacity=".85"/><ellipse cx="11" cy="7" rx="4" ry="4" fill="#eef4ea" opacity=".9"/><ellipse cx="77" cy="11" rx="4" ry="6" fill="#f2f6ee" opacity=".9"/><ellipse cx="23" cy="3" rx="2.600" ry="3.400" fill="#2a3420"/><ellipse cx="4" cy="16" rx="5" ry="12" fill="#24521c"/><ellipse cx="85" cy="20" rx="4" ry="14" fill="#1f4a1a"/>
<ellipse cx="44" cy="29" rx="24" ry="6" fill="#4ea032" opacity=".8"/><ellipse cx="50" cy="28" rx="1.800" ry="2.800" fill="#dcecA4"/></g><rect width="88" height="50" fill="url(#t4b)"/>
<g filter="url(#b2)"><path d="M27 29.500C35 30 46 36 51 48.500L43 50C40 42 33 35 27 29.500Z" fill="#da641c"/><ellipse cx="60" cy="36" rx="4" ry="1.800" fill="#c4c49c"/><ellipse cx="80" cy="23" rx="3.600" ry="3.600" fill="#2a4848"/></g></svg>

<!-- T5 beach -->
<svg class="th" style="left:791px;top:291px" width="88" height="50" viewBox="0 0 88 50"><defs><linearGradient id="t5a" x2="0" y2="1"><stop offset="0" stop-color="#c4d6f6"/><stop offset=".35" stop-color="#b4dcf4"/><stop offset=".62" stop-color="#cfe6f0"/><stop offset=".72" stop-color="#ecdcd0"/><stop offset="1" stop-color="#f6dcc0"/></linearGradient><linearGradient id="t5b"><stop offset="0" stop-color="#ecd0f4"/><stop offset=".35" stop-color="#ecd0f4" stop-opacity="0"/><stop offset=".7" stop-color="#8ccaf8" stop-opacity="0"/><stop offset="1" stop-color="#8ccaf8"/></linearGradient></defs><rect width="88" height="50" fill="url(#t5a)"/><g filter="url(#b3)"><rect x="-6" y="-8" width="100" height="30" fill="url(#t5b)" opacity=".75"/></g>
<g filter="url(#b2)"><ellipse cx="40" cy="24" rx="22" ry="6" fill="#e8f4fa" opacity=".8"/><ellipse cx="14" cy="30" rx="12" ry="3" fill="#9cd0ec" opacity=".6"/></g><g filter="url(#b1)"><rect x="59" y="23.500" width="2.600" height="6" rx="1" fill="#2a3a3c"/><rect x="59.400" y="29" width="2" height="14" fill="#f4f0ec"/><path d="M61 42L72 47" stroke="#c8b4a4" stroke-width="1.200"/></g></svg>

<!-- T6 lamp -->
<svg class="th" style="left:893px;top:291px" width="88" height="50" viewBox="0 0 88 50"><defs><linearGradient id="t6a" x1="0" y1="0" x2=".6" y2="1"><stop offset="0" stop-color="#2ea6c8"/><stop offset=".5" stop-color="#48b4d2"/><stop offset="1" stop-color="#74c4dc"/></linearGradient></defs><rect width="88" height="50" fill="url(#t6a)"/>
<g filter="url(#b3)"><path d="M50 22L88 30V50H36Z" fill="#b4e0ec" opacity=".42"/><ellipse cx="47" cy="22" rx="8" ry="5" fill="#e8f6f8" opacity=".7"/></g><g filter="url(#b1)"><path d="M8 50C13 39 25 33 37 25" stroke="#1c3440" stroke-width="1.700" fill="none"/><ellipse cx="43.500" cy="20.500" rx="7" ry="3.600" transform="rotate(-28 43.500 20.500)" fill="#33444a"/><ellipse cx="46" cy="22.500" rx="6.400" ry="3.500" transform="rotate(-28 46 22.500)" fill="#fff8ea"/></g></svg>

<!-- T7 penguin -->
<svg class="th" style="left:380px;top:431px" width="88" height="55" viewBox="0 0 88 55"><rect width="88" height="55" fill="#f7f7fa"/>
<g filter="url(#b2)"><ellipse cx="52" cy="46" rx="16" ry="4" fill="#e4e6ee"/><ellipse cx="50.500" cy="31" rx="12" ry="16" fill="#6e737f"/><ellipse cx="51" cy="44" rx="7" ry="3" fill="#3c4048"/><ellipse cx="40.500" cy="36" rx="2" ry="6" fill="#5a5f6a"/><circle cx="51" cy="11.500" r="6.400" fill="#16161a"/><ellipse cx="50" cy="12.500" rx="3.200" ry="3" fill="#f4f4f4"/><ellipse cx="52" cy="18" rx="5" ry="2" fill="#e8e8ec"/></g></svg>

<!-- T8 flowers (selected) -->
<svg class="th" style="left:483px;top:436px" width="88" height="50" viewBox="0 0 88 50"><rect width="88" height="50" fill="#fcf6f1"/>
<g filter="url(#b2)" transform="translate(-1 1.500)"><path d="M52 46L60 24L80 24L86 46Z" fill="#f4efeb"/><ellipse cx="70" cy="19" rx="12" ry="9" fill="#d9ccf0" opacity=".9"/><circle cx="64" cy="17" r="3.600" fill="#8a68d0"/><circle cx="75" cy="20" r="3.600" fill="#5a48b0"/><circle cx="70" cy="13" r="3" fill="#a888e0"/><circle cx="68" cy="25" r="3" fill="#4a3ca0"/><circle cx="78" cy="13" r="2.400" fill="#b8a0e8"/><ellipse cx="69" cy="21" rx="3" ry="4" fill="#5f9a3c"/><path d="M66 28h9l-2.500 13h-4z" fill="#6aa844"/><path d="M52 46h34" stroke="#d4cfc8" stroke-width="1.400"/><path d="M58 36v12M84 36v12" stroke="#e4dfd8" stroke-width="1.200"/></g></svg>

<!-- T9 legs -->
<svg class="th" style="left:600px;top:398px" width="58" height="88" viewBox="0 0 58 88"><rect width="58" height="88" fill="#fff"/>
<g filter="url(#b1)"><path d="M48 41.600C45 47 43 52 41.200 58.200C39.500 63 38 68 35.400 71.800C32 75.500 28 78 24.300 80.500C24 82.500 25.500 83.900 27.600 83.900C31 83.800 34.500 83 37.400 82C40 81 42 79.500 43.200 77.600C44.500 75 44.600 72.500 45.100 69.800C47 64 50 59 52.900 54.300C54.500 51.500 56 49 58 46.500V34Z" fill="#dda78c"/>
<path d="M58 13.500C53 15 50 17.500 47 21.200C43 26.500 40.500 32 37.400 36.800C34 41.500 30 45.500 25.700 48.400C21.500 51 16.500 53.500 12 55.300C9 56.500 6 57.200 3.900 58.200C3.500 60.500 4.500 62 6.200 62.500C10.500 63 15 62 19.800 61C23 60.500 25.800 60.200 27.600 59.100C29 57.500 29 55.500 29.600 53.300C33.500 50 38.500 47.500 43.200 44.600C48 41.500 53 38.500 58 35.800Z" fill="#e9b69b"/>
<path d="M56 16.500C51 20 47.500 26 44 31.500" stroke="#f5d0ba" stroke-width="2" fill="none"/><path d="M53 45C50 50 48 55 46 61" stroke="#ecbfa6" stroke-width="1.600" fill="none"/></g></svg>

<!-- T10 document -->
<svg class="th" style="left:688px;top:428px" width="88" height="58" viewBox="0 0 88 58"><rect width="88" height="58" fill="#fdfdfd"/>
<g filter="url(#b1)"><path d="M12.500 0v58M75.500 0v58" stroke="#d4d4d8" stroke-width=".8"/><path d="M14 4h20" stroke="#c0c4cc" stroke-width="1" stroke-dasharray="1.400 .6"/><path d="M17 12h6M25 12h50M25 16h24M25 20h50M25 24h24" stroke="#a4a8b4" stroke-width="1.100" stroke-dasharray="1.400 .5"/><path d="M15 29h56M15 34h56M15 39h56M15 44h56M15 49h56M15 54h56" stroke="#e4e4e8" stroke-width=".7"/><circle cx="58.500" cy="37.500" r="8.200" fill="#fdf6f6" stroke="#e08a98" stroke-width="1"/><circle cx="58.500" cy="37.500" r="6.200" fill="none" stroke="#f0b4bc" stroke-width=".8"/><rect x="57" y="36.600" width="3.200" height="3.400" fill="#d8284a"/></g></svg>

<!-- T11 showimg -->
<svg class="th" style="left:791px;top:436px" width="88" height="50" viewBox="0 0 88 50"><defs><linearGradient id="t11a" x2="0" y2="1"><stop offset="0" stop-color="#d4e8a4"/><stop offset=".3" stop-color="#c0dc9c"/><stop offset=".5" stop-color="#7aa6a4"/><stop offset=".75" stop-color="#3a5c98"/><stop offset="1" stop-color="#2a4484"/></linearGradient></defs><rect width="88" height="50" fill="url(#t11a)"/>
<g filter="url(#b3)"><ellipse cx="78" cy="6" rx="22" ry="14" fill="#587c84" opacity=".9"/><ellipse cx="12" cy="8" rx="22" ry="12" fill="#e2f0b0" opacity=".9"/><ellipse cx="10" cy="42" rx="18" ry="9" fill="#3f7c88" opacity=".85"/><ellipse cx="74" cy="40" rx="20" ry="12" fill="#2a4488" opacity=".9"/></g>
<g filter="url(#b2)"><ellipse cx="53" cy="23" rx="10.500" ry="10.500" fill="#3f8a68"/><ellipse cx="47" cy="26" rx="5" ry="7.500" fill="#b8ea5c"/><path d="M43 15l3-5l3 4l3-6l3 5l4-3l2 6l4-1l-1 6z" fill="#1f5a40"/><ellipse cx="59" cy="24" rx="5" ry="6.500" fill="#2f6e62"/><ellipse cx="21" cy="38" rx="5" ry="3" fill="#9cdc4c"/><circle cx="44" cy="44" r="1.500" fill="#c8f0e8"/><circle cx="42" cy="38" r="1" fill="#c8f0e8"/><circle cx="8" cy="28" r="1.300" fill="#c8f0d8"/></g></svg>

<!-- T12 fern heart -->
<svg class="th" style="left:893px;top:436px" width="88" height="50" viewBox="0 0 88 50"><defs><linearGradient id="t12a" x2="0" y2="1"><stop offset="0" stop-color="#6a5a4a"/><stop offset=".3" stop-color="#7c8424"/><stop offset="1" stop-color="#88a410"/></linearGradient><linearGradient id="t12b"><stop offset="0" stop-color="#b02860"/><stop offset=".3" stop-color="#8a3a5a" stop-opacity=".6"/><stop offset=".5" stop-color="#1f6a80"/><stop offset="1" stop-color="#0f6a84"/></linearGradient></defs><rect width="88" height="50" fill="url(#t12a)"/><g filter="url(#b3)"><rect x="-6" y="-8" width="100" height="19" fill="url(#t12b)" opacity=".9"/></g>
<g filter="url(#b2)"><rect y="12" width="88" height="10" fill="#7a7a28" opacity=".5"/><ellipse cx="80" cy="22" rx="8" ry="12" fill="#2a7a70" opacity=".6"/></g>
<g filter="url(#b1)"><path d="M69 50C72 38 78 24 73 11C69 1 56 3 57 13C57.500 19 64 20 65 15" stroke="#86d044" stroke-width="6" fill="none" stroke-linecap="round"/><path d="M69 46C60 36 46 35 42 26C38 16 48 9 56 15C61 19 57 26 52 24" stroke="#98dc58" stroke-width="6" fill="none" stroke-linecap="round"/><path d="M69 50C71 38 76 24 72 12C69 5 61 5 60 12" stroke="#d4f8b0" stroke-width="1.400" fill="none"/><path d="M66 42C58 34 46 33 44 25C42 18 49 13 55 17" stroke="#d0f6a8" stroke-width="1.400" fill="none"/><path d="M52 22C56 24 62 24 66 18" stroke="#5ca82c" stroke-width="2" fill="none"/></g></svg>

<!-- T13 cupcakes -->
<svg class="th" style="left:380px;top:581px" width="88" height="50" viewBox="0 0 88 50"><defs><linearGradient id="t13a" x2="1" y2=".6"><stop offset="0" stop-color="#a9a5a1"/><stop offset=".45" stop-color="#d0cdd0"/><stop offset="1" stop-color="#e9e7ec"/></linearGradient></defs><rect width="88" height="50" fill="url(#t13a)"/>
<g filter="url(#b2)"><path d="M52 0H88V6C78 4 66 8 56 5Z" fill="#6f8060"/><ellipse cx="74" cy="17" rx="13" ry="9" fill="#f0eef4"/><ellipse cx="71" cy="20" rx="5" ry="2.400" fill="#e6d27a"/><path d="M0 26L16 22L20 50H0Z" fill="#dcdadc"/><ellipse cx="49" cy="39" rx="34" ry="13" fill="#fdfdfd"/><ellipse cx="49" cy="41" rx="28" ry="8" fill="#f2f2f4"/></g>
<g filter="url(#b1)"><rect x="10" y="15" width="21" height="8" rx="2" fill="#f3e9e4"/><rect x="11" y="21.500" width="19" height="5.500" rx="2" fill="#d9a75c"/><path d="M9.500 16.500C7 10 14 6 17 1C18 0 22 0 23 1C27 6 33 10 31.500 16.500C26 19.500 15 19.500 9.500 16.500Z" fill="#7ac62a"/><path d="M13 10C18 12 24 12 28 9.500M11 14.500C18 17 24 17 30 14" stroke="#58a41c" stroke-width="1" fill="none"/>
<rect x="34.500" y="30" width="24" height="8" rx="2" fill="#f6eee8"/><rect x="35.500" y="37" width="22.500" height="7" rx="2.500" fill="#dfb266"/><path d="M33 31C30 24 38 19 42 13C43 11 48 11 49 13C53 19 61 24 58.500 31C52 34.500 40 34.500 33 31Z" fill="#6ec024"/><path d="M38 22C43 24.500 49 24.500 54 21.500M35 28C42 31 51 31 57 27.500" stroke="#4e9a18" stroke-width="1.100" fill="none"/></g></svg>

<!-- T14 grass macro -->
<svg class="th" style="left:483px;top:581px" width="88" height="50" viewBox="0 0 88 50"><defs><linearGradient id="t14a"><stop offset="0" stop-color="#4a7a30"/><stop offset=".4" stop-color="#3c6c28"/><stop offset=".72" stop-color="#1f4a16"/><stop offset="1" stop-color="#2c5a20"/></linearGradient></defs><rect width="88" height="50" fill="url(#t14a)"/>
<g filter="url(#b3)"><ellipse cx="12" cy="22" rx="8" ry="6" fill="#86ac8c"/><ellipse cx="16" cy="36" rx="12" ry="6" fill="#84ac68"/><ellipse cx="6" cy="6" rx="9" ry="8" fill="#1c4414"/><ellipse cx="80" cy="26" rx="10" ry="22" fill="#16400f"/><ellipse cx="45" cy="41" rx="5" ry="2.600" fill="#b08a30"/><path d="M50 0L62 0L78 44L68 46Z" fill="#5a9440"/><ellipse cx="30" cy="8" rx="12" ry="6" fill="#2c5a20"/></g>
<g filter="url(#b2)"><path d="M57 31L66 44" stroke="#94bc78" stroke-width="1.500"/><path d="M30 50C48 43 70 44.500 88 50" stroke="#86b064" stroke-width="2.400" fill="none"/><ellipse cx="45" cy="20" rx="17.500" ry="6.400" transform="rotate(37 45 20)" fill="#9cbca4"/><ellipse cx="41.500" cy="16.500" rx="11" ry="3.400" transform="rotate(37 41.500 16.500)" fill="#cfe2d4"/><ellipse cx="50" cy="25" rx="8" ry="3" transform="rotate(37 50 25)" fill="#86a890"/></g></svg>

<!-- T15 avocado -->
<svg class="th" style="left:585px;top:581px" width="88" height="50" viewBox="0 0 88 50"><rect width="88" height="50" fill="#f5b6d1"/>
<g filter="url(#b1)"><ellipse cx="46" cy="40" rx="12" ry="3" fill="#e49cc0" opacity=".7"/><g transform="rotate(8 44 26)"><path d="M44 8C52 8 57 18 57 27C57 35 51 40 44 40C37 40 31 35 31 27C31 18 37 8 44 8Z" fill="#4a5a18"/><path d="M44 10C51 10 55 19 55 27C55 33.500 50 38 44 38C38 38 33 33.500 33 27C33 19 38 10 44 10Z" fill="#c4d04a"/><ellipse cx="44" cy="27.500" rx="7" ry="7.400" fill="#8a5a18"/><ellipse cx="42.500" cy="25.500" rx="3.600" ry="4" fill="#b8802c"/></g></g></svg>

<!-- T16 brush -->
<svg class="th" style="left:688px;top:564px" width="88" height="67" viewBox="0 0 88 67"><rect width="88" height="67" fill="#fff"/>
<g filter="url(#b1)"><path d="M7 13.500L14 11.500L24 7.500L36 4.500L51 1L54 3L64 3.500L70 5.500L73 9.500L79 11.500L74 15L81 18.500L80 23.500L86 26.500L84 31.500L82 35.500L84.700 41.600L81 45.600L74 49.600L64 55.600L50 59.600L36 63.600L25 66L32 62.600L27 58.600L14 57.600L9 54.600L11 52.600L3 49L8 46.600L5 41.600L10 37.600L7 33.500L14 32.500L3 26.500L9 25.500L1.500 22.500L12 18.500Z" fill="#3d2f86"/></g></svg>

<!-- T17 black -->
<div class="th" style="left:791px;top:581px;width:88px;height:50px;background:#000"></div>

<!-- labels -->
<div class="t lbl" style="left:380.6px;top:351px;letter-spacing:-0.113px">10432342_130...</div>
<div class="t lbl" style="left:481.0px;top:351px;letter-spacing:-0.039px">67216585b1e5...</div>
<div class="t lbl" style="left:585.0px;top:351px;letter-spacing:-0.019px">154072078584...</div>
<div class="t lbl" style="left:684.3px;top:351px;letter-spacing:-0.067px">2019032810125...</div>
<div class="t lbl" style="left:791.4px;top:351px;letter-spacing:0.057px">ab6f7e864e17...</div>
<div class="t lbl" style="left:891.8px;top:351px;letter-spacing:0.032px">c0a4-hxhyium9...</div>
<div class="t lbl" style="left:379.2px;top:496px;letter-spacing:0.314px">dong_dongwu...</div>
<div class="t lbl" style="left:497.7px;top:496px;letter-spacing:0.125px">fc1fc6cd79</div>
<div class="t lbl" style="left:585.0px;top:496px;letter-spacing:0.212px">meirentuitupia...</div>
<div class="t lbl" style="left:711.500px;top:496px;letter-spacing:.4px">QQ<span class="cj" style="width:24px;letter-spacing:0">截图</span></div>
<div class="t lbl" style="left:684.3px;top:513px;letter-spacing:0.225px">20210415153113</div>
<div class="t lbl" style="left:810.6px;top:496px;letter-spacing:0.334px">showimg</div>
<div class="t lbl" style="left:891.8px;top:496px;letter-spacing:-0.087px">t01a88459df4e...</div>
<div class="t lbl" style="left:378.3px;top:641px;letter-spacing:0.038px">t01927e65817f...</div>
<div class="t lbl" style="left:483.4px;top:641px;letter-spacing:-0.010px">t01331350923...</div>
<div class="t lbl" style="left:585.0px;top:641px;letter-spacing:0.081px">v2-9cf7d4a557...</div>
<div class="t lbl" style="left:721px;top:641px"><span class="cj" style="width:23.5px;letter-spacing:-0.5px">笔刷</span></div>
<div class="t lbl" style="left:819px;top:641px"><span class="cj" style="width:23.5px;letter-spacing:-0.5px">图片</span>1</div>

<!-- red arrows -->
<svg class="a" style="left:0;top:0;pointer-events:none" width="1080" height="798" viewBox="0 0 1080 798">
<path d="M595.500 520.800L618.800 525.800L613.400 531.600L719 618L717.600 619.200L609.200 536.400L605.300 542.300Z" fill="#f2302e"/>
<path d="M973 694.500L988 677L990.500 683.500L1066 653L1066.500 654L995 689L996.500 695.500Z" fill="#f2302e"/>
</svg>
</body>
</html>
